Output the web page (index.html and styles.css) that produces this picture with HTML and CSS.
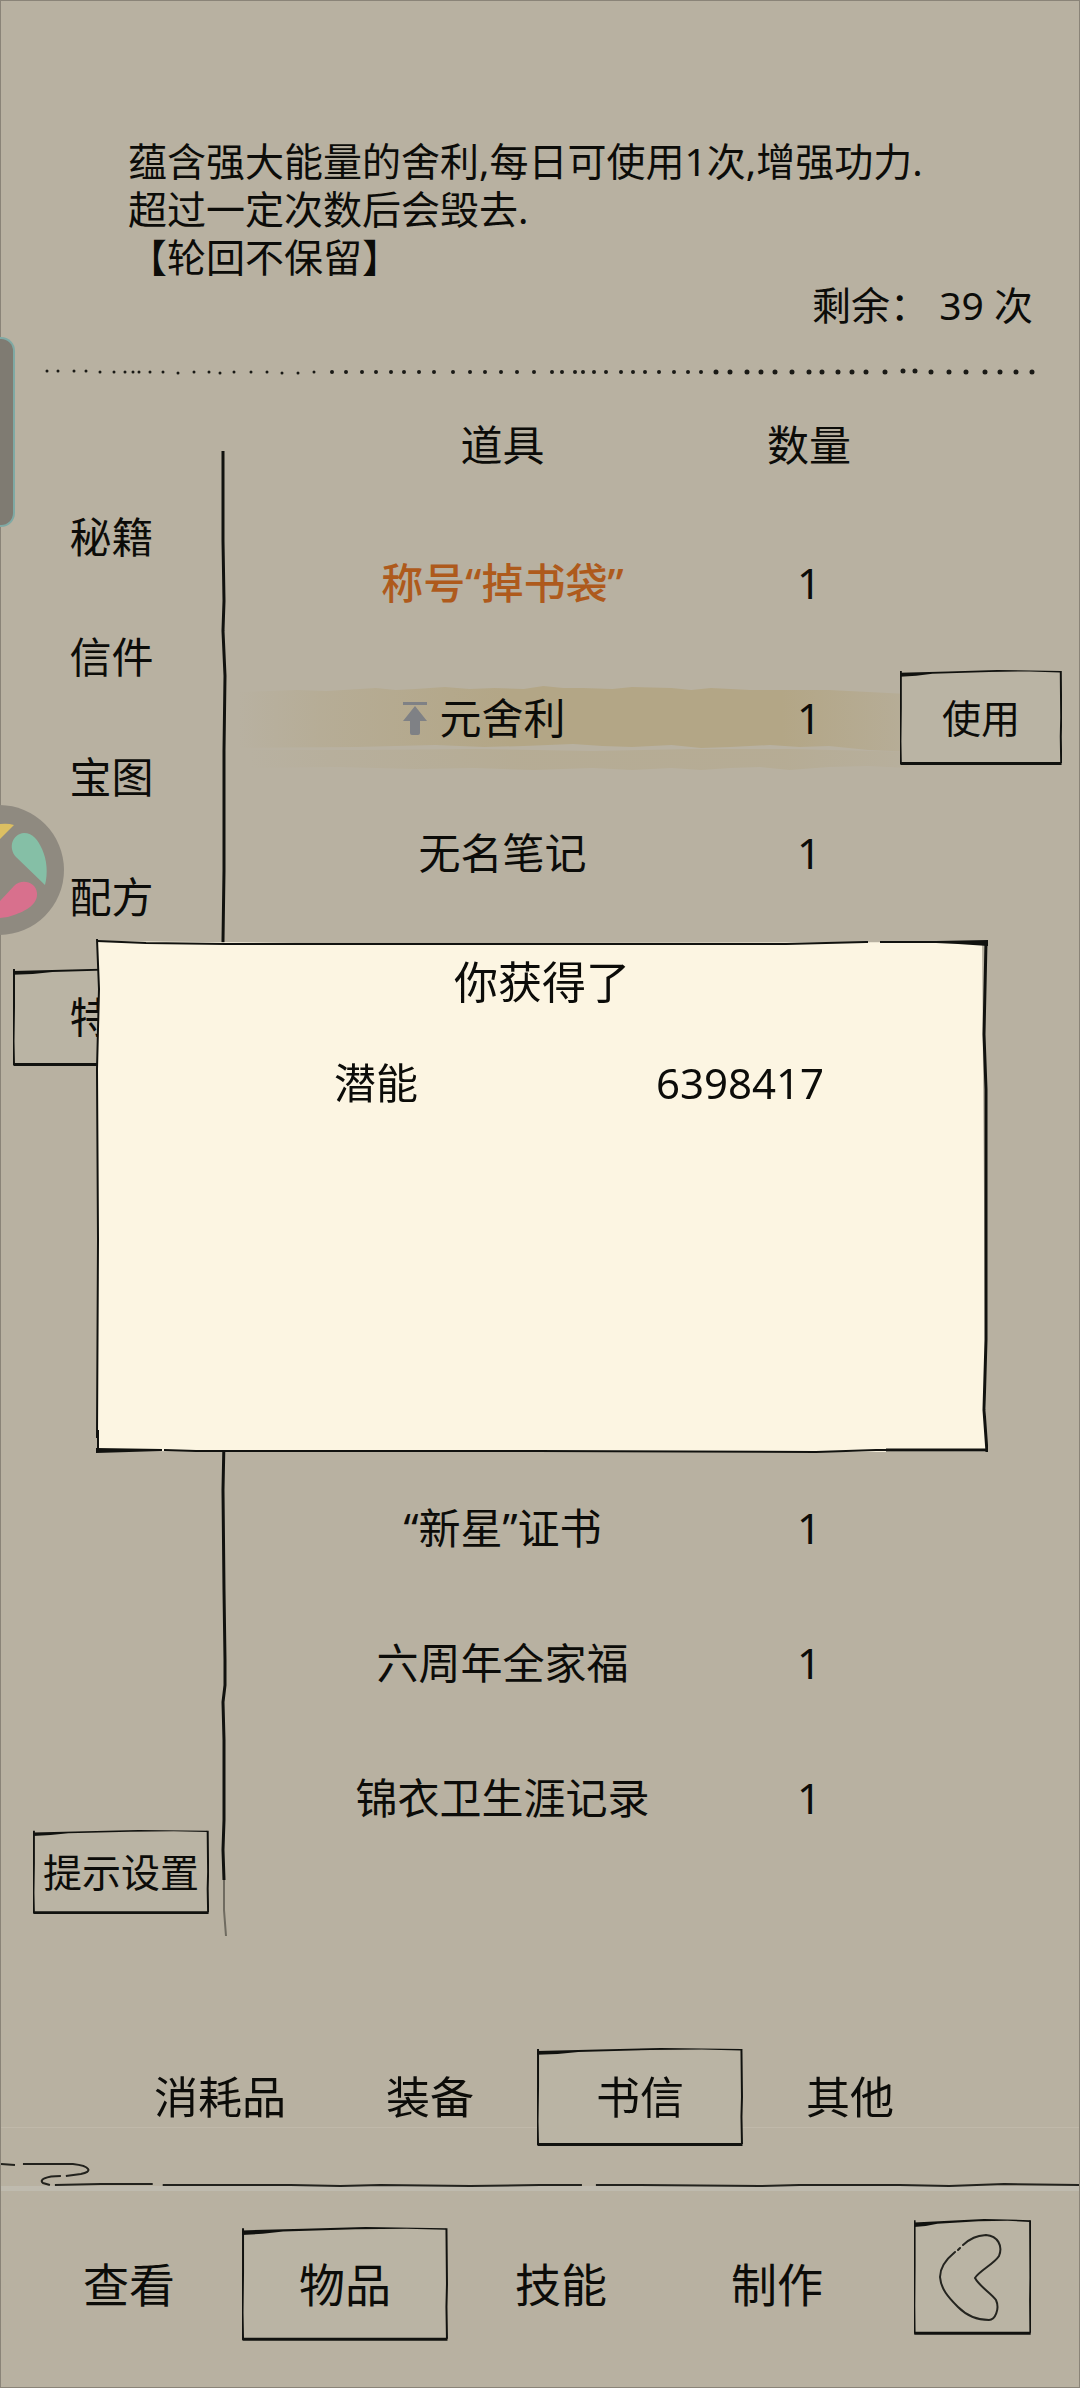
FILE: index.html
```html
<!DOCTYPE html>
<html lang="zh-CN">
<head>
    <meta charset="UTF-8">
    <meta name="viewport" content="width=device-width, initial-scale=1.0">
    <title>物品</title>
    <link rel="stylesheet" href="styles.css">
</head>
<body>
    <!-- shared hand-drawn frames -->
    <svg class="defs" aria-hidden="true">
        <symbol id="frame" viewBox="0 0 200 100" preserveAspectRatio="none">
            <path class="fill" d="M1 4 L200 2 L199 98 L1 98 Z"/>
            <path class="ink-fill" d="M0 3 L60 1.5 L120 0 L198 1 L198 2.5 L160 1.5 L110 2 L40 4 L20 6 L0 7 Z"/>
            <path class="ink thin" d="M1 1 L1 40 L0.5 75 L1 99"/>
            <path class="ink thin" d="M198.5 1 L199 50 L198.5 70 L199 98"/>
            <path class="ink thick" d="M0.5 98.5 L199.5 98.5"/>
        </symbol>
        <symbol id="paper" viewBox="0 0 892 513" preserveAspectRatio="none">
            <path class="paper-fill" d="M2 2 L200 4 L420 4 L886 3 L890 512 L2 511 Z"/>
            <path class="ink thin" d="M1 2 L50 4 L130 5 L420 5 L690 5 L770 3 L772 3 M784 3 L850 3"/>
            <path class="ink-fill" d="M840 2 L892 1 L892 7 L862 5 L840 4 Z"/>
            <path class="ink thin" d="M1 0 L3 50 L1 130 L2 300 L1 498"/>
            <path class="ink thick" d="M890 3 L888 95 L890 150 L890 400 L888 470 L891 512"/>
            <path class="ink-fill" d="M0 508 L66 509 L66 511 L0 513 Z"/>
            <path class="ink thin" d="M2 490 L2 510 M68 510 L100 511 L440 511 L720 512 L780 510 L892 510"/>
            <path class="ink thick" d="M790 510 L892 510"/>
        </symbol>
    </svg>

    <div class="page">
        <header class="description">
            <p>蕴含强大能量的舍利,每日可使用1次,增强功力.</p>
            <p>超过一定次数后会毁去.</p>
            <p>【轮回不保留】</p>
            <p class="remaining">剩余： 39 次</p>
        </header>

        <svg class="dots" viewBox="0 0 990 12" preserveAspectRatio="none" aria-hidden="true">
            <path d="M2 5h0M13 5h0M29 5h0M41 5h0M55 6h0M69 6h0M80 6h0M88 6h0M94 6h0M105 6h0M118 6h0M133 7h0M149 6h0M164 6h0M175 7h0M189 6h0M206 6h0M222 6h0M237 7h0M253 7h0M269 6h0"/>
            <path class="mid" d="M287 6h0M301 6h0M317 6h0M331 6h0M346 6h0M359 6h0M374 6h0M389 6h0M408 6h0M425 6h0M440 6h0M456 6h0M472 6h0M489 6h0M507 6h0M517 6h0M530 6h0M538 6h0M549 6h0M561 6h0M576 6h0M588 6h0M600 6h0M614 6h0M629 6h0M643 6h0M656 6h0"/>
            <path class="big" d="M671 6h0M685 6h0M702 6h0M716 6h0M730 6h0M747 6h0M764 6h0M777 6h0M793 6h0M807 6h0M821 6h0M840 6h0M858 5h0M870 5h0M886 6h0M904 6h0M921 6h0M940 6h0M955 6h0M971 6h0M987 6h0"/>
        </svg>

        <main class="bag">
            <nav class="sidebar">
                <button type="button">秘籍</button>
                <button type="button">信件</button>
                <button type="button">宝图</button>
                <button type="button">配方</button>
                <button type="button" class="framed"><svg class="frame"><use href="#frame"/></svg><span>特殊</span></button>
                <button type="button" class="framed tips"><svg class="frame"><use href="#frame"/></svg><span>提示设置</span></button>
            </nav>

            <svg class="divider" viewBox="0 0 14 1486" preserveAspectRatio="none" aria-hidden="true">
                <path d="M7 0 L7 90 L8 150 L7 180 L9 225 L8 300 L8 420 L7 490 L8 990 L7 1040 L8 1140 L9 1210 L9 1235 L7 1252 L8 1290 L8 1370 L7 1400 L8 1430"/>
                <path class="tail" d="M8 1430 L8 1460 L10 1486"/>
            </svg>

            <table class="items">
                <colgroup>
                    <col>
                    <col class="col-count">
                    <col class="col-action">
                </colgroup>
                <thead>
                    <tr><th>道具</th><th>数量</th><th></th></tr>
                </thead>
                <tbody>
                    <tr><td class="rare">称号“掉书袋”</td><td>1</td><td></td></tr>
                    <tr class="selected">
                        <td>
                            <svg class="brush" viewBox="0 0 700 92" preserveAspectRatio="none" aria-hidden="true">
                                <defs>
                                    <linearGradient id="wash">
                                        <stop offset="0" stop-color="#b3a686" stop-opacity="0"/>
                                        <stop offset="0.12" stop-color="#b3a686" stop-opacity="0.4"/>
                                        <stop offset="0.4" stop-color="#b3a686"/>
                                        <stop offset="0.8" stop-color="#b3a686"/>
                                        <stop offset="1" stop-color="#b3a686" stop-opacity="0.3"/>
                                    </linearGradient>
                                </defs>
                                <path fill="url(#wash)" d="M0 10 L60 8 L90 9 L140 6 L160 8 L180 7 L210 5 L235 7 L260 6 L290 7 L310 4 L330 6 L350 6 L380 7 L400 5 L440 6 L460 8 L480 6 L520 8 L600 8 L680 12 L690 70 L640 68 L600 64 L570 65 L540 63 L500 65 L470 66 L440 63 L400 65 L370 64 L340 62 L290 64 L250 65 L200 63 L120 65 L0 66 Z"/>
                                <path fill="url(#wash)" opacity="0.45" d="M10 68 L120 68 L240 67 L360 69 L460 67 L560 67 L690 70 L680 86 L640 84 L600 85 L560 88 L530 85 L500 86 L470 88 L440 86 L400 88 L360 86 L300 88 L240 86 L180 87 L100 85 L10 86 Z"/>
                            </svg>
                            <span class="pinned">
                                <svg class="pin" viewBox="0 0 24 34" aria-hidden="true">
                                    <path d="M0 1h24v3H0zM12 5l12 15h-7v12q0 2 -2 2h-6q-2 0 -2 -2V20H0z"/>
                                </svg>元舍利
                            </span>
                        </td>
                        <td>1</td>
                        <td><button type="button" class="framed use"><svg class="frame"><use href="#frame"/></svg><span>使用</span></button></td>
                    </tr>
                    <tr><td>无名笔记</td><td>1</td><td></td></tr>
                    <tr class="covered"><td colspan="3"></td></tr>
                    <tr><td>“新星”证书</td><td>1</td><td></td></tr>
                    <tr><td>六周年全家福</td><td>1</td><td></td></tr>
                    <tr><td>锦衣卫生涯记录</td><td>1</td><td></td></tr>
                </tbody>
            </table>
        </main>

        <nav class="tabs">
            <button type="button">消耗品</button>
            <button type="button">装备</button>
            <button type="button" class="framed"><svg class="frame"><use href="#frame"/></svg><span>书信</span></button>
            <button type="button">其他</button>
        </nav>

        <svg class="river" viewBox="0 0 1080 64" preserveAspectRatio="none" aria-hidden="true">
            <rect class="seam" y="0" width="1080" height="1"/>
            <rect class="bank" y="59" width="1080" height="5"/>
            <path d="M0 37 L14 38 M22 37 L72 37 C90 39 92 45 80 47 L65 49 M60 49 C44 49 38 53 42 56 L49 58 M54 58 L100 57 L152 57 M162 58 L290 58 L340 59 L380 58 L470 59 L540 58 L582 58 M596 58 L640 58 L760 59 L800 58 L900 58 L950 59 L1005 57 L1080 58"/>
        </svg>

        <nav class="bottom-nav">
            <button type="button">查看</button>
            <button type="button" class="framed"><svg class="frame"><use href="#frame"/></svg><span>物品</span></button>
            <button type="button">技能</button>
            <button type="button">制作</button>
            <button type="button" class="framed back" aria-label="返回">
                <svg class="frame"><use href="#frame"/></svg>
                <svg class="arrow" viewBox="0 0 116 116" aria-hidden="true">
                    <path d="M41 33 C30 42 26 50 26 58 C27 70 34 78 44 88 C53 97 63 101 75 101 C81 101 86 90 82 81 C77 74 66 68 61 59 C65 52 80 45 85 37 C89 27 84 17 72 16 C62 17 57 19 49 26 M44 31 L46 29"/>
                </svg>
            </button>
        </nav>
    </div>

    <div class="handle"></div>

    <svg class="ball" viewBox="0 0 64 130" aria-hidden="true">
        <circle class="ball-base" cx="-1" cy="65" r="65"/>
        <path class="leaf-yellow" d="M0 19 Q8 18 14 20 L0 34 Z"/>
        <path class="leaf-teal" d="M45 80 L16 52 C8 43 12 29 24 28 C33 28 38 35 42 44 C47 55 48 68 45 80 Z"/>
        <path class="leaf-pink" d="M0 96 L14 81 C22 73 36 77 37 88 C38 99 26 106 14 110 Q7 113 0 113 Z"/>
    </svg>

    <div class="overlay">
        <section class="reward" role="dialog" aria-labelledby="reward-title">
            <svg class="frame"><use href="#paper"/></svg>
            <h1 id="reward-title">你获得了</h1>
            <dl>
                <dt>潜能</dt>
                <dd>6398417</dd>
            </dl>
        </section>
    </div>
</body>
</html>
```

FILE: styles.css
```css
* {
    box-sizing: border-box;
}
body {
    margin: 0;
    background-color: #b8b1a1;
    color: #0c0c09;
    font-family: "Noto Sans", "Noto Sans CJK SC", sans-serif;
    font-size: 42px;
    line-height: 48px;
}
p, h1, dl, dd {
    margin: 0;
}
button {
    position: relative;
    padding: 0;
    border: none;
    background: none;
    color: inherit;
    font: inherit;
    cursor: pointer;
}
.defs {
    position: absolute;
    width: 0;
    height: 0;
}
.page {
    min-height: 100vh;
    border: 1px solid #8a8478;
    display: flex;
    flex-direction: column;
}

/* sketched frames */
.framed {
    isolation: isolate;
}
.frame {
    position: absolute;
    inset: 0;
    width: 100%;
    height: 100%;
    z-index: -1;
    overflow: visible;
}
.fill {
    fill: #bab4a4;
}
.paper-fill {
    fill: #fcf5e2;
}
.ink {
    fill: none;
    stroke: #11120f;
    vector-effect: non-scaling-stroke;
}
.thin {
    stroke-width: 2px;
}
.thick {
    stroke-width: 3px;
}
.ink-fill {
    fill: #11120f;
}

.description {
    padding: 136px 46px 0 127px;
    font-size: 39px;
}
.remaining {
    text-align: right;
}
.dots {
    height: 12px;
    margin: 37px 44px 0;
    fill: none;
    stroke: #1a1a16;
    stroke-width: 3px;
    stroke-linecap: round;
}
.dots .mid {
    stroke-width: 4px;
}
.dots .big {
    stroke-width: 5px;
}

.bag {
    flex: 1;
    display: flex;
}
.sidebar {
    width: 215px;
    padding: 110px 6px 22px 12px;
    display: flex;
    flex-direction: column;
    gap: 22px;
}
.sidebar button {
    height: 98px;
}
.sidebar .tips {
    height: 84px;
    width: 176px;
    margin-top: auto;
    margin-left: 20px;
    font-size: 39px;
}
.divider {
    width: 14px;
    margin-top: 73px;
    height: 1485px;
    fill: none;
    stroke: #11120f;
    stroke-width: 3px;
}
.divider .tail {
    stroke: #6f6b60;
    stroke-width: 2px;
}
.items {
    flex: 1;
    align-self: flex-start;
    margin-left: 8px;
    table-layout: fixed;
    border-collapse: collapse;
    text-align: center;
}
.col-count {
    width: 84px;
}
.col-action {
    width: 228px;
}
.items th {
    height: 137px;
    padding: 0 0 4px;
    font-weight: normal;
    white-space: nowrap;
}
.items td {
    height: 135px;
    padding: 0;
}
.items .covered td {
    height: 540px;
}
.items .rare {
    color: #ae5a1c;
    font-weight: 500;
}
.selected {
    position: relative;
    z-index: 0;
}
.brush {
    position: absolute;
    left: 0;
    top: 32px;
    width: 82%;
    height: 92px;
    z-index: -1;
}
.pinned {
    position: relative;
}
.pin {
    position: absolute;
    right: calc(100% + 12px);
    top: 12px;
    width: 24px;
    height: 34px;
    fill: #7f8185;
}
.use {
    display: block;
    width: 162px;
    height: 95px;
    margin-left: auto;
    margin-right: 17px;
    font-size: 39px;
}

.tabs {
    position: relative;
    z-index: 1;
    margin-top: 112px;
    padding: 0 124px 0 114px;
    display: grid;
    grid-template-columns: repeat(4, 1fr);
    font-size: 44px;
}
.tabs button {
    height: 98px;
    margin: 0 2px;
}
.river {
    width: 100%;
    height: 64px;
    margin-top: -19px;
    fill: none;
    stroke: #22221d;
    stroke-width: 2px;
}
.river rect {
    stroke: none;
}
.river .seam {
    fill: #c0b9aa;
}
.river .bank {
    fill: #bfbbaf;
}

.bottom-nav {
    padding: 28px 0 46px 20px;
    display: grid;
    grid-template-columns: repeat(4, 216px) 1fr;
    align-items: start;
    font-size: 46px;
}
.bottom-nav button {
    height: 114px;
    margin: 8px 5px 0;
}
.bottom-nav .back {
    width: 117px;
    height: 116px;
    margin: 0 0 0 29px;
}
.arrow {
    display: block;
    width: 116px;
    height: 116px;
    fill: none;
    stroke: #24241f;
    stroke-width: 2px;
    stroke-linecap: round;
}

/* system widgets stuck to the screen edge */
.handle {
    position: fixed;
    left: 0;
    top: 337px;
    width: 15px;
    height: 190px;
    background-color: #7f7b72;
    border: 2px solid #7fa9a4;
    border-left: none;
    border-radius: 0 14px 14px 0;
}
.ball {
    position: fixed;
    left: 0;
    top: 805px;
    width: 64px;
    height: 130px;
}
.ball-base {
    fill: #8f8a80;
}
.leaf-yellow {
    fill: #dcbf62;
}
.leaf-teal {
    fill: #85bfa6;
}
.leaf-pink {
    fill: #d8708d;
}

.overlay {
    position: fixed;
    inset: 0;
    padding: 4px 0 0 4px;
    display: flex;
    align-items: center;
    justify-content: center;
}
.reward {
    position: relative;
    isolation: isolate;
    width: 892px;
    min-height: 514px;
    padding-top: 19px;
    text-align: center;
}
.reward h1 {
    font-size: 44px;
    font-weight: normal;
    line-height: 48px;
}
.reward dl {
    margin-top: 53px;
    padding: 0 66px 0 98px;
    display: grid;
    grid-template-columns: 1fr 1fr;
    font-size: 42px;
}
```
